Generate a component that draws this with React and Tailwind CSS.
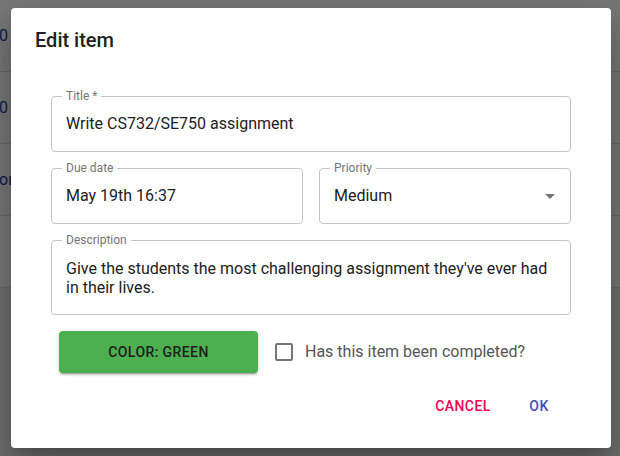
import { useState } from "react";

function Field({ label, className = "", children }) {
  return (
    <div className={`relative rounded border border-[#c4c4c4] ${className}`}>
      <span className="absolute -top-[8px] left-[10px] bg-white px-[4px] text-[12px] leading-[14px] text-[#757575]">
        {label}
      </span>
      {children}
    </div>
  );
}

const rows = ["0 a", "0", "on", ""];

export default function App() {
  const [done, setDone] = useState(false);

  return (
    <div
      className="relative h-[456px] w-[620px] overflow-hidden bg-[#ececec]"
      style={{ fontFamily: "Roboto, 'Liberation Sans', sans-serif" }}
    >
      {/* ===== PAGE BEHIND ===== */}
      <div className="bg-white">
        {rows.map((t, i) => (
          <div
            key={i}
            className="flex h-[72px] items-center border-b border-[#e0e0e0] text-[16px] text-[#2a3aa8]"
          >
            <span className="-ml-[1px]">{t}</span>
          </div>
        ))}
      </div>

      {/* ===== BACKDROP + DIALOG ===== */}
      <div className="absolute inset-0 flex items-center justify-center bg-black/[0.53]">
        <div className="ml-[2px] flex h-[440px] w-[600px] flex-col rounded bg-white shadow-[0_11px_15px_-7px_rgba(0,0,0,0.2),0_24px_38px_3px_rgba(0,0,0,0.14),0_9px_46px_8px_rgba(0,0,0,0.12)]">
          <h2 className="px-6 py-4 text-[20px] font-medium leading-8 text-[#212121]">
            Edit item
          </h2>

          <div className="flex flex-col gap-4 px-10 pt-6 text-[16px] text-[#212121]">
            <Field label="Title *" className="flex h-[56px] items-center px-[14px]">
              Write CS732/SE750 assignment
            </Field>

            <div className="grid grid-cols-2 gap-4">
              <Field label="Due date" className="flex h-[56px] items-center px-[14px]">
                May 19th 16:37
              </Field>
              <Field label="Priority" className="flex h-[56px] items-center justify-between pl-[14px] pr-[8px]">
                <span>Medium</span>
                <svg width="24" height="24" viewBox="0 0 24 24" className="fill-[#757575]">
                  <path d="M7 10l5 5 5-5z" />
                </svg>
              </Field>
            </div>

            <Field label="Description" className="h-[75px] px-[14px] py-[18px] leading-[19px]">
              Give the students the most challenging assignment they've ever had in their lives.
            </Field>

            <div className="flex items-center">
              <button className="ml-2 h-[42px] w-[199px] rounded bg-[#4caf50] text-[14px] font-medium tracking-[0.4px] text-[#1e1e1e] shadow-[0_3px_1px_-2px_rgba(0,0,0,0.2),0_2px_2px_0_rgba(0,0,0,0.14),0_1px_5px_0_rgba(0,0,0,0.12)]">
                COLOR: GREEN
              </button>
              <label className="flex cursor-pointer items-center">
                <span
                  onClick={() => setDone(!done)}
                  className="ml-[17px] h-[18px] w-[18px] rounded-[2px] border-2 border-[#757575]"
                />
                <span className="ml-3 text-[#555]">Has this item been completed?</span>
              </label>
            </div>
          </div>

          <div className="flex justify-end gap-3 pr-10 pt-[15px]">
            <button className="h-9 w-16 rounded text-[14px] font-medium tracking-[0.4px] text-[#f50057]">
              CANCEL
            </button>
            <button className="h-9 w-16 rounded text-[14px] font-medium tracking-[0.4px] text-[#3f51b5]">
              OK
            </button>
          </div>
        </div>
      </div>
    </div>
  );
}
